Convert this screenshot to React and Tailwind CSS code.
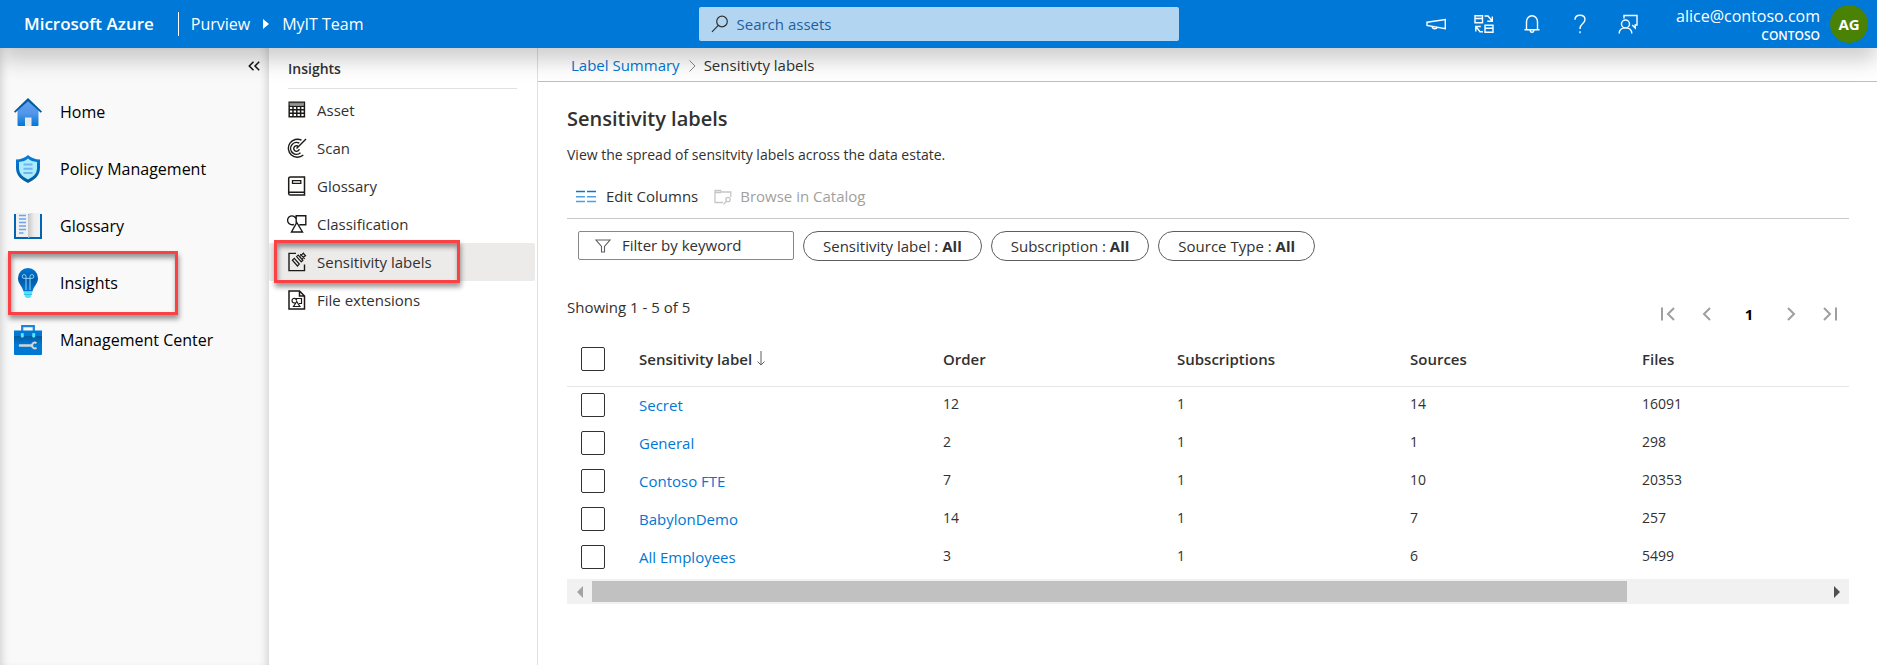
import React from "react";

const HomeIcon = () => (
  <svg viewBox="0 0 28 28" className="size-7">
    <defs>
      <linearGradient id="home" x1="0" y1="0" x2="0" y2="1">
        <stop offset="0" stopColor="#5ea0ef" />
        <stop offset="0.5" stopColor="#5396ea" />
        <stop offset="1" stopColor="#0078d4" />
      </linearGradient>
    </defs>
    <path d="M14 2.5 3.5 12.5V27a1 1 0 0 0 1 1h19a1 1 0 0 0 1-1V12.500z" fill="url(#home)" />
    <rect x="11" y="19.500" width="6.500" height="8.500" fill="#e8e8e8" />
    <path d="M14 0 28 13.400 26.800 14.800 14 3.200 1.200 14.800 0 13.400z" fill="#005ba1" />
  </svg>
);

const ShieldIcon = () => (
  <svg viewBox="0 0 28 28" className="size-7">
    <defs>
      <linearGradient id="shield" x1="0" y1="0" x2="0" y2="1">
        <stop offset="0" stopColor="#0a7cdc" />
        <stop offset="1" stopColor="#005ba1" />
      </linearGradient>
    </defs>
    <path d="M2 4.500C7 4.400 10.500 3 14 0c3.500 3 7 4.400 12 4.500V13c0 8-6 12-12 15C8 25 2 21 2 13z" fill="url(#shield)" />
    <path d="M5 7c3.800-.2 6.500-1.300 9-3.400C16.500 5.700 19.200 6.800 23 7v6.300c0 5.800-4.400 8.900-9 11.300-4.600-2.400-9-5.500-9-11.300z" fill="#a9ecfb" />
    <path d="M9.500 9.500h9M9.500 13.800h9M9.500 18h9" stroke="#73b3f0" strokeWidth="2" />
  </svg>
);

const BookIcon = () => (
  <svg viewBox="0 0 28 28" className="size-7">
    <defs>
      <linearGradient id="page" x1="0" y1="0" x2="1" y2="0">
        <stop offset="0" stopColor="#c6c6c6" />
        <stop offset="0.5" stopColor="#ededed" />
        <stop offset="1" stopColor="#f2f2f2" />
      </linearGradient>
    </defs>
    <path d="M0 2h28v25H0z" fill="#0065b3" />
    <path d="M2 1h11c1 0 1 1 1 1v23H2z" fill="#f0f0f0" />
    <path d="M14 3c1-2 3-2 4-2h8v24H16l-2 1z" fill="url(#page)" />
    <path d="M5 3.500h7M5 7h7M5 10.500h7M5 14h7M5 17.500h7M5 21h4.500" stroke="#6ba5f2" strokeWidth="1.500" />
  </svg>
);

const BulbIcon = () => (
  <svg viewBox="0 0 28 30" className="h-[30px] w-7">
    <defs>
      <linearGradient id="bulb" x1="0" y1="0" x2="0" y2="1">
        <stop offset="0" stopColor="#0078d4" />
        <stop offset="0.500" stopColor="#005ba8" />
        <stop offset="1" stopColor="#0078d4" />
      </linearGradient>
    </defs>
    <path d="M14 0a10 10 0 0 1 10 10.200c0 5.800-4.500 7.800-5.500 13.300h-9C8.500 18 4 16 4 10.200A10 10 0 0 1 14 0z" fill="url(#bulb)" />
    <path d="M12 22V8.500a1.900 1.900 0 1 0-1.900 1.900h7.800a1.900 1.900 0 1 0-1.900-1.900V22" fill="none" stroke="#8fd0f7" strokeWidth="1" />
    <path d="M9.800 24h8.400v2.200l-1 .8v1.500L15.500 30h-3l-1.700-1.500V27l-1-.8z" fill="#50e6ff" />
    <path d="M10 26.500h8" stroke="#32b4d8" strokeWidth=".8" />
  </svg>
);

const ToolboxIcon = () => (
  <svg viewBox="0 0 28 30" className="h-[30px] w-7">
    <defs>
      <linearGradient id="tool" x1="0" y1="0" x2="0" y2="1">
        <stop offset="0" stopColor="#005ba1" />
        <stop offset="0.600" stopColor="#0078d4" />
      </linearGradient>
    </defs>
    <path d="M8.200 6V1.200h11.600V6" fill="none" stroke="#1a85dc" strokeWidth="2.200" />
    <path d="M0 5.500h28V29a1 1 0 0 1-1 1H1a1 1 0 0 1-1-1z" fill="#0078d4" />
    <path d="M0 11h28v14H0z" fill="url(#tool)" />
    <rect x="6.800" y="8" width="3" height="4.500" rx="1" fill="#50e6ff" />
    <rect x="18.200" y="8" width="3" height="4.500" rx="1" fill="#50e6ff" />
    <path d="M6 20.500h12" stroke="#d5d5d5" strokeWidth="2.600" strokeLinecap="round" />
    <path d="M22.500 18.300a2.800 2.800 0 1 0 0 4.400" fill="none" stroke="#d5d5d5" strokeWidth="2" />
  </svg>
);

const stroke = { fill: "none", stroke: "#1b1a19", strokeWidth: 1.5 };

const TableIcon = () => (
  <svg viewBox="0 0 20 20" className="size-5" {...stroke}>
    <path d="M2.200 2.200h15.200v14.600H2.200zM2 6.200h15.500M2 9.700h15.500M2 13.200h15.500M6 6v11M9.800 6v11M13.600 6v11" strokeWidth="1.500" />
    <path d="M2.500 3.800h14.500" stroke="#888" strokeWidth="2.200" />
  </svg>
);

const ScanIcon = () => (
  <svg viewBox="0 0 20 20" className="size-5" {...stroke} strokeWidth="1.400">
    <path d="M14.500 2.200A9 9 0 1 0 16.300 17M12.300 5.200A5.900 5.900 0 1 0 13.500 14.800M10.800 8A2.800 2.800 0 1 0 12.300 11.200M9.500 10.600 19 1" />
  </svg>
);

const NotebookIcon = () => (
  <svg viewBox="0 0 20 20" className="size-5" {...stroke}>
    <path d="M3.500 1h14v18h-14c-1 0-1.800-.6-1.800-1.600V2.600C1.700 1.600 2.500 1 3.500 1zM1.800 16.200h15.700" />
    <path d="M5.500 4.700h8.300v2.600H5.500z" strokeWidth="1.300" />
  </svg>
);

const ShapesIcon = () => (
  <svg viewBox="0 0 20 20" className="size-5" {...stroke} strokeWidth="1.400">
    <path d="M9.200 8.700V1.800h9.600v9h-6.500M6.900 10.300A4.400 4.400 0 1 1 9.200 5M9.800 8.500 15.500 18h-11z" />
  </svg>
);

const LabelIcon = () => (
  <svg viewBox="0 0 20 20" className="size-5" {...stroke} strokeWidth="1.400">
    <path d="M9 1.400H2v17.200h15.500V12.500" />
    <path d="M5.400 8.200 7.300 6.400l5 5.700-1.800 1.900z" strokeWidth="1.200" />
    <path d="M9.600 4.600 11.200 3.100l4.700 5.200-1.600 1.500zM13.300 2.200l4.400 4.700M16 1l3 3.200M12.700 4.600l4-3.700M14.700 6.900l4-3.600" strokeWidth="1.200" />
  </svg>
);

const FileShapesIcon = () => (
  <svg viewBox="0 0 20 20" className="size-5" {...stroke}>
    <path d="M2 1h10.500l5 5v13H2zM12.500 1v5h5" />
    <path d="M9.500 10.500V8.500h5v5h-2.500M8.200 12.800a2.300 2.300 0 1 1 1.300-2.800M9.700 11.500l3.200 5.000H6.500z" strokeWidth="1.200" />
  </svg>
);

const mainNav = [
  ["Home", HomeIcon],
  ["Policy Management", ShieldIcon],
  ["Glossary", BookIcon],
  ["Insights", BulbIcon],
  ["Management Center", ToolboxIcon],
];

const subNav = [
  ["Asset", TableIcon],
  ["Scan", ScanIcon],
  ["Glossary", NotebookIcon],
  ["Classification", ShapesIcon],
  ["Sensitivity labels", LabelIcon],
  ["File extensions", FileShapesIcon],
];

const rows = [
  ["Secret", 12, 1, 14, 16091],
  ["General", 2, 1, 1, 298],
  ["Contoso FTE", 7, 1, 10, 20353],
  ["BabylonDemo", 14, 1, 7, 257],
  ["All Employees", 3, 1, 6, 5499],
];

const headerActions = [
  [
    "Announcements",
    <path key="a" d="M1 8.200 19.300 5.500v9.200L1 11.500zM6 12.300c.3 1.500 1.300 2.500 2.700 2.500s2.300-.7 2.600-1.700" />,
  ],
  [
    "Switch directory",
    <g key="s">
      <path d="M1 1.700h7.500v7H1zM1 4.500h7.500M11 11.200h8v7h-8zM11 14.200h8" />
      <path d="M10.500 2h3.500l4 4.800M18.300 2.500v4.800h-5M9 17.800H6L2.300 13M1.800 17.500v-5h5" />
    </g>,
  ],
  [
    "Notifications",
    <path key="n" d="M2.500 15.700h15M4.500 15.500V7.800a5.500 6 0 0 1 11 0v7.700M8 16.300c.3 1.500 1 2 2 2s1.700-.5 2-2" />,
  ],
  [
    "Help",
    <path key="h" d="M5 5.800C5 3 7 1.200 10 1.200s5 1.800 5 4.400c0 4-5 4.400-5 8.700v.7M10 17.300v2" />,
  ],
  [
    "Feedback",
    <g key="f">
      <path d="M6 4.500V1.500h13v9.500h-1.800v3l-3-3" />
      <path d="M7.500 6a4 4 0 1 1 0 8 4 4 0 0 1 0-8zM1.200 19.500c0-3.500 2.600-5.700 6.300-5.700s6.300 2.200 6.300 5.700" />
    </g>,
  ],
];

function Checkbox({ label }) {
  return (
    <input
      type="checkbox"
      aria-label={label}
      className="block size-6 appearance-none rounded-xs border border-[#323130] bg-white checked:bg-[#0078d4]"
    />
  );
}

function Pill({ name }) {
  return (
    <button className="h-[30px] rounded-full border border-[#605e5c] px-[19px] text-[15px] text-[#323130]">
      {name} : <b className="font-bold">All</b>
    </button>
  );
}

function PagerButton({ label, d }) {
  return (
    <button aria-label={label} className="flex w-4 justify-center">
      <svg viewBox="0 0 16 16" className="size-4" fill="none" stroke="#a19f9d" strokeWidth="2">
        <path d={d} />
      </svg>
    </button>
  );
}

export default function App() {
  return (
    <div className="flex min-h-screen flex-col bg-white font-['Open_Sans','Noto_Sans',sans-serif] text-[#323130]">
      <header className="z-10 flex h-12 shrink-0 items-center bg-[#0078d7] text-white shadow-[0_12px_22px_rgba(0,0,0,0.2)]">
        <div className="flex flex-1 items-center text-base">
          <a href="#azure" className="ml-6 text-[17px] font-semibold">Microsoft Azure</a>
          <span className="mr-3 ml-6 h-6 w-px bg-white" />
          <a href="#purview">Purview</a>
          <svg viewBox="0 0 6 10" className="mx-[13px] h-[10px] w-[6px]" fill="white">
            <path d="M0 0 6 5 0 10z" />
          </svg>
          <a href="#team">MyIT Team</a>
        </div>
        <label className="flex h-[34px] w-[480px] items-center gap-2 rounded-xs bg-[#b2d6f2] pl-3">
          <svg viewBox="0 0 18 18" className="size-[18px]" fill="none" stroke="#323130" strokeWidth="1.200">
            <circle cx="11" cy="6.500" r="5.300" />
            <path d="M7.300 10.300 1 16.800" />
          </svg>
          <input
            aria-label="Search assets"
            placeholder="Search assets"
            className="min-w-0 flex-1 bg-transparent text-[15px] text-[#1f5fa0] outline-none placeholder:text-[#1f5fa0]"
          />
        </label>
        <div className="flex flex-1 items-center justify-end">
          <div className="mr-[38px] flex items-center gap-7">
            {headerActions.map(([label, icon]) => (
              <button key={label} aria-label={label}>
                <svg viewBox="0 0 20 20" className="size-5" fill="none" stroke="white" strokeWidth="1.400">
                  {icon}
                </svg>
              </button>
            ))}
          </div>
          <div className="mr-[10px] pt-1 text-right">
            <div className="text-base leading-5">alice@contoso.com</div>
            <div className="text-xs leading-5 font-semibold">CONTOSO</div>
          </div>
          <div className="mr-[9px] flex size-[38px] items-center justify-center rounded-full bg-[#498205] text-[15px] font-bold">
            AG
          </div>
        </div>
      </header>

      <div className="flex flex-1">
        <nav className="w-[269px] shrink-0 bg-[#f9f9f9] shadow-[inset_8px_0_8px_-6px_rgba(0,0,0,0.16),inset_-8px_0_8px_-6px_rgba(0,0,0,0.16)]">
          <div className="flex h-[35px] items-center justify-end pr-[9px]">
            <button aria-label="Collapse menu">
              <svg viewBox="0 0 12 10" className="h-[10px] w-3" fill="none" stroke="#111" strokeWidth="1.500">
                <path d="M5.500 .7 1.300 5l4.200 4.300M11.200 .7 7 5l4.200 4.300" />
              </svg>
            </button>
          </div>
          <ul>
            {mainNav.map(([label, Icon]) => (
              <li key={label} className="relative">
                <a href={"#" + label} className="flex h-[57px] items-center gap-[18px] pl-[14px] text-base font-medium text-black">
                  <Icon />
                  {label}
                </a>
                {label === "Insights" && (
                  <span className="pointer-events-none absolute -top-[3px] left-2 h-16 w-[170px] border-3 border-[#fb4143] shadow-[1px_4px_5px_rgba(0,0,0,0.4),inset_1px_4px_5px_rgba(0,0,0,0.4)]" />
                )}
              </li>
            ))}
          </ul>
        </nav>

        <nav className="w-[269px] shrink-0 border-r border-[#e1dfdd]">
          <h2 className="mr-5 ml-[19px] h-[41px] border-b border-[#e1e1e1] pt-[10px] text-sm leading-[22px] font-semibold">
            Insights
          </h2>
          <ul className="pt-[2px]">
            {subNav.map(([label, Icon]) => (
              <li key={label} className="relative">
                <a
                  href={"#" + label}
                  className={
                    "mr-[2px] flex h-[38px] items-center gap-[10px] rounded-xs pl-[18px] text-[15px] " +
                    (label === "Sensitivity labels" ? "bg-[#edebe9]" : "")
                  }
                >
                  <Icon />
                  {label}
                </a>
                {label === "Sensitivity labels" && (
                  <span className="pointer-events-none absolute -top-[3px] left-[5px] h-[43px] w-[186px] border-3 border-[#fb4143] shadow-[1px_4px_5px_rgba(0,0,0,0.4),inset_1px_4px_5px_rgba(0,0,0,0.4)]" />
                )}
              </li>
            ))}
          </ul>
        </nav>

        <main className="min-w-0 flex-1">
          <div className="flex h-[34px] items-center gap-2 border-b border-[#bebebe] pt-[2px] pl-[33px] text-[15px]">
            <a href="#summary" className="text-[#0078d4]">Label Summary</a>
            <svg viewBox="0 0 8 12" className="h-3 w-2" fill="none" stroke="#8a8886" strokeWidth="1">
              <path d="M1.500 .5 7 6l-5.500 5.500" />
            </svg>
            <span>Sensitivty labels</span>
          </div>

          <div className="pr-7 pl-[29px]">
            <h1 className="pt-[21px] text-xl leading-8 font-semibold">Sensitivity labels</h1>
            <p className="pt-[10px] text-sm leading-5">View the spread of sensitvity labels across the data estate.</p>

            <div className="mt-[10px] flex h-[44px] items-center border-b border-[#c8c8c8] pl-[9px] text-[15px]">
              <button className="flex items-center gap-[10px]">
                <svg viewBox="0 0 20 14" className="h-[14px] w-5" strokeWidth="1.600" fill="none">
                  <path d="M0 1.500h9M11 1.500h9" stroke="#0078d4" />
                  <path d="M0 6.800h9M11 6.800h9M0 11.500h9M11 11.500h9" stroke="#4da0e2" />
                </svg>
                Edit Columns
              </button>
              <button disabled className="ml-4 flex items-center gap-2 text-[#a19f9d]">
                <svg viewBox="0 0 18 16" className="h-4 w-[18px]" fill="none" stroke="#c8c6c4" strokeWidth="1.300">
                  <path d="M9 13.500H1V1.500h5.500l1 1.500h9.300v5M1 3.500h6" />
                  <circle cx="14" cy="10.500" r="2.200" />
                  <path d="M12.400 12.200 9.500 15.300" />
                </svg>
                Browse in Catalog
              </button>
            </div>

            <div className="flex items-start gap-[9px] pt-3 pl-[11px]">
              <label className="flex h-[29px] w-[216px] items-center gap-[11px] rounded-xs border border-[#8a8886] pl-4">
                <svg viewBox="0 0 16 14" className="h-[14px] w-4" fill="none" stroke="#605e5c" strokeWidth="1.100">
                  <path d="M1 1h14L9.500 7.500V13h-3V7.500z" />
                </svg>
                <input
                  aria-label="Filter by keyword"
                  placeholder="Filter by keyword"
                  className="min-w-0 flex-1 bg-transparent text-[15px] outline-none placeholder:text-[#323130]"
                />
              </label>
              <Pill name="Sensitivity label" />
              <Pill name="Subscription" />
              <Pill name="Source Type" />
            </div>

            <div className="pt-[34px]">
              <p className="text-[15px] leading-6">Showing 1 - 5 of 5</p>
            </div>
            <div className="-mt-4 flex h-[22px] items-center justify-end gap-6 pr-[10px]">
              <PagerButton label="First page" d="M3 1.500v13M15 2 9 8l6 6" />
              <PagerButton label="Previous page" d="M11 2 5 8l6 6" />
              <span className="w-5 text-center text-[15px] font-bold text-black">1</span>
              <PagerButton label="Next page" d="M5 2l6 6-6 6" />
              <PagerButton label="Last page" d="M1 2l6 6-6 6M13 1.500v13" />
            </div>

            <table className="mt-[7px] w-full table-fixed border-collapse text-left">
              <colgroup>
                <col className="w-[72px]" />
                <col className="w-[304px]" />
                <col className="w-[234px]" />
                <col className="w-[233px]" />
                <col className="w-[232px]" />
                <col />
              </colgroup>
              <thead>
                <tr className="h-[54px] border-b border-[#e6e6e6] text-[15px]">
                  <th className="pl-[14px]">
                    <Checkbox label="Select all" />
                  </th>
                  <th className="font-semibold">
                    <button className="flex items-center gap-[5px]">
                      Sensitivity label
                      <svg viewBox="0 0 8 15" className="h-[15px] w-2" fill="none" stroke="#605e5c">
                        <path d="M4 0v14M.5 10.500 4 14l3.500-3.500" />
                      </svg>
                    </button>
                  </th>
                  <th className="font-semibold">Order</th>
                  <th className="font-semibold">Subscriptions</th>
                  <th className="font-semibold">Sources</th>
                  <th className="font-semibold">Files</th>
                </tr>
              </thead>
              <tbody>
                {rows.map(([name, ...values]) => (
                  <tr key={name} className="h-[38px]">
                    <td className="pl-[14px]">
                      <Checkbox label={"Select " + name} />
                    </td>
                    <td className="text-[15px]">
                      <a href={"#" + name} className="text-[#0078d4]">{name}</a>
                    </td>
                    {values.map((v, i) => (
                      <td key={i} className="pb-[2px] text-sm">{v}</td>
                    ))}
                  </tr>
                ))}
              </tbody>
            </table>

            <div className="mt-[3px] flex h-[25px] items-center bg-[#f1f1f1]">
              <button aria-label="Scroll left" className="flex w-[25px] justify-center">
                <svg viewBox="0 0 6 12" className="h-3 w-[6px]" fill="#a3a3a3"><path d="M6 0 0 6l6 6z" /></svg>
              </button>
              <div className="flex-1">
                <div className="h-[21px] w-[84%] bg-[#c1c1c1]" />
              </div>
              <button aria-label="Scroll right" className="flex w-[25px] justify-center">
                <svg viewBox="0 0 6 12" className="h-3 w-[6px]" fill="#505050"><path d="M0 0l6 6-6 6z" /></svg>
              </button>
            </div>
          </div>
        </main>
      </div>
    </div>
  );
}
